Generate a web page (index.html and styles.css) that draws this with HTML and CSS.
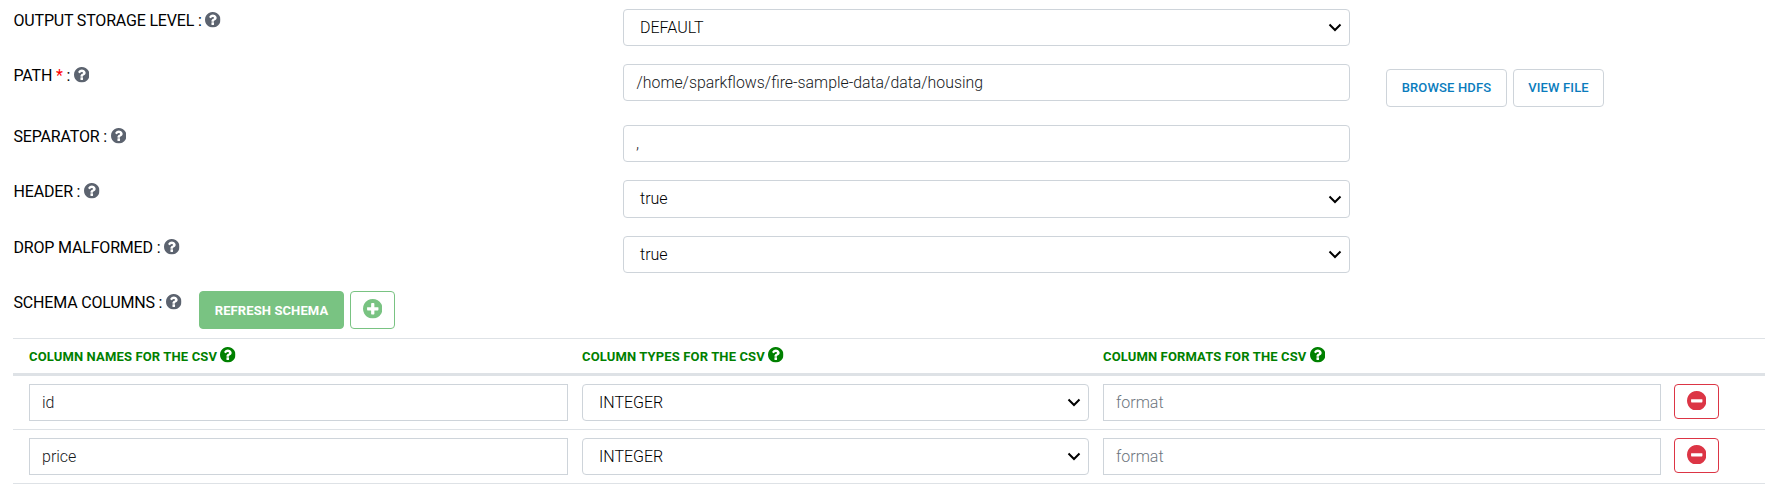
FILE: index.html
```html
<!DOCTYPE html>
<html lang="en">
<head>
<meta charset="utf-8">
<title>CSV Settings</title>
<link rel="stylesheet" href="styles.css">
</head>
<body>
<svg width="0" height="0" class="defs">
  <symbol id="help" viewBox="0 0 1536 1536"><path d="M896 1248v-192q0-14-9-23t-23-9h-192q-14 0-23 9t-9 23v192q0 14 9 23t23 9h192q14 0 23-9t9-23zm256-672q0-88-55.500-163t-138.500-116-170-41q-243 0-371 213-15 24 8 42l132 100q7 6 19 6 16 0 25-12 53-68 86-92 34-24 86-24 48 0 85.500 26t37.500 59q0 38-20 61t-68 45q-63 28-115.500 86.500t-52.500 125.500v36q0 14 9 23t23 9h192q14 0 23-9t9-23q0-19 21.500-49.500t54.500-49.500q32-18 49-28.500t46-35 44.500-48 28-60.500 12.500-81zm384 192q0 209-103 385.500t-279.500 279.500-385.500 103-385.500-103-279.500-279.500-103-385.500 103-385.500 279.500-279.500 385.500-103 385.500 103 279.500 279.500 103 385.500z"/></symbol>
  <symbol id="plus" viewBox="0 0 1536 1536"><path d="M1216 832v-128q0-26-19-45t-45-19h-256v-256q0-26-19-45t-45-19h-128q-26 0-45 19t-19 45v256h-256q-26 0-45 19t-19 45v128q0 26 19 45t45 19h256v256q0 26 19 45t45 19h128q26 0 45-19t19-45v-256h256q26 0 45-19t19-45zm320-64q0 209-103 385.500t-279.500 279.500-385.500 103-385.500-103-279.500-279.500-103-385.500 103-385.500 279.500-279.500 385.500-103 385.500 103 279.500 279.500 103 385.500z"/></symbol>
  <symbol id="minus" viewBox="0 0 1536 1536"><path d="M1216 832v-128q0-26-19-45t-45-19h-768q-26 0-45 19t-19 45v128q0 26 19 45t45 19h768q26 0 45-19t19-45zm320-64q0 209-103 385.500t-279.500 279.500-385.500 103-385.500-103-279.500-279.500-103-385.500 103-385.500 279.500-279.500 385.500-103 385.500 103 279.500 279.500 103 385.500z"/></symbol>
  <symbol id="chevron" viewBox="0 0 14 9"><path d="M1.500 1.500 7 7l5.500-5.500" fill="none" stroke="#000" stroke-width="2"/></symbol>
</svg>
<main class="form">
  <div class="row">
    <div class="label">OUTPUT STORAGE LEVEL : <svg class="help"><use href="#help"/></svg></div>
    <div class="control select"><span>DEFAULT</span><svg class="chevron"><use href="#chevron"/></svg></div>
  </div>
  <div class="row row-path">
    <div class="label">PATH <span class="required">*</span> : <svg class="help"><use href="#help"/></svg></div>
    <div class="control path">/home/sparkflows/fire-sample-data/data/housing</div>
    <div class="actions"><button class="btn btn-browse">BROWSE HDFS</button><button class="btn btn-view">VIEW FILE</button></div>
  </div>
  <div class="row">
    <div class="label">SEPARATOR : <svg class="help"><use href="#help"/></svg></div>
    <div class="control">,</div>
  </div>
  <div class="row row-header">
    <div class="label">HEADER : <svg class="help"><use href="#help"/></svg></div>
    <div class="control select"><span>true</span><svg class="chevron"><use href="#chevron"/></svg></div>
  </div>
  <div class="row">
    <div class="label">DROP MALFORMED : <svg class="help"><use href="#help"/></svg></div>
    <div class="control select"><span>true</span><svg class="chevron"><use href="#chevron"/></svg></div>
  </div>
  <div class="schema">
    <div class="label">SCHEMA COLUMNS : <svg class="help"><use href="#help"/></svg></div>
    <button class="btn btn-refresh">REFRESH SCHEMA</button>
    <button class="btn btn-add"><svg class="sign"><use href="#plus"/></svg></button>
  </div>
  <section class="table">
    <div class="grid thead">
      <div>COLUMN NAMES FOR THE CSV <svg class="help"><use href="#help"/></svg></div>
      <div>COLUMN TYPES FOR THE CSV <svg class="help"><use href="#help"/></svg></div>
      <div>COLUMN FORMATS FOR THE CSV <svg class="help"><use href="#help"/></svg></div>
    </div>
    <div class="grid trow">
      <div class="control square">id</div>
      <div class="control select"><span>INTEGER</span><svg class="chevron"><use href="#chevron"/></svg></div>
      <div class="control square placeholder">format</div>
      <button class="btn btn-remove"><svg class="sign"><use href="#minus"/></svg></button>
    </div>
    <div class="grid trow">
      <div class="control square">price</div>
      <div class="control select"><span>INTEGER</span><svg class="chevron"><use href="#chevron"/></svg></div>
      <div class="control square placeholder">format</div>
      <button class="btn btn-remove"><svg class="sign"><use href="#minus"/></svg></button>
    </div>
  </section>
</main>
</body>
</html>
```
FILE: styles.css
```css
* { box-sizing: border-box; }
body {
  margin: 0;
  overflow: hidden;
  background: #fff;
  color: #000;
  font: 400 16px/24px Roboto, sans-serif;
}
svg { fill: currentColor; }
.defs { display: block; position: absolute; }
.form { padding: 9px 0 0 13px; }
.row {
  display: grid;
  grid-template-columns: 610px 727px 1fr;
  align-items: start;
  height: 55px;
}
.row-path { height: 61px; }
.row-header { height: 56px; }
.label { padding-left: .5px; white-space: nowrap; letter-spacing: -.18px; }
.required { color: #f00; }
.help { width: 15.5px; height: 15.5px; vertical-align: -2px; }
.label .help { color: #5c636f; vertical-align: -1.5px; }
.control {
  display: flex;
  align-items: center;
  height: 37px;
  padding: 0 12px;
  border: 1px solid #ced4da;
  border-radius: 4px;
  color: #16191c;
  font-weight: 300;
}
.path { padding-left: 12.5px; font-size: 15.85px; }
.row-header .control { height: 38px; }
.select { justify-content: space-between; padding: 0 7px 0 16px; color: #000; }
.chevron { width: 14px; height: 9px; }
.square { border-radius: 0; }
.placeholder { color: #6c757d; }
.btn {
  display: flex;
  align-items: center;
  justify-content: center;
  height: 38px;
  padding: 0;
  border: 1px solid #ced4da;
  border-radius: 4px;
  background: #fff;
  color: #0a7cbd;
  font: 500 13px/20px Roboto, sans-serif;
}
.actions { display: flex; gap: 6px; padding: 5px 0 0 36px; }
.btn-browse { width: 121px; letter-spacing: .15px; }
.btn-view { width: 91px; letter-spacing: .15px; }
.schema { display: flex; height: 56px; }
.schema .label { width: 186px; }
.btn-refresh {
  width: 145px;
  padding-top: 1px;
  border-color: #79c382;
  background: #79c382;
  color: #fff;
  font-weight: 700;
  letter-spacing: .1px;
}
.btn-add { width: 45px; margin-left: 6px; border-color: #79c382; color: #79c382; }
.sign { width: 19.5px; height: 19.5px; margin-bottom: 2px; }
.table { margin-top: -9px; border-top: 1px solid #dee2e6; }
.grid {
  display: grid;
  grid-template-columns: 539px 507px 558px 45px;
  column-gap: 14px;
  padding-left: 16px;
}
.thead {
  height: 37px;
  padding-top: 6px;
  border-bottom: 3px solid #dee2e6;
  color: #008000;
  font-size: 13px;
  font-weight: 700;
  letter-spacing: .14px;
}
.thead .help { vertical-align: -1.5px; }
.trow { height: 54px; padding-top: 8px; border-bottom: 1px solid #dee2e6; }
.btn-remove {
  width: 45px;
  height: 35px;
  margin-left: -1px;
  border-color: #dc3545;
  color: #dc3545;
}
```
